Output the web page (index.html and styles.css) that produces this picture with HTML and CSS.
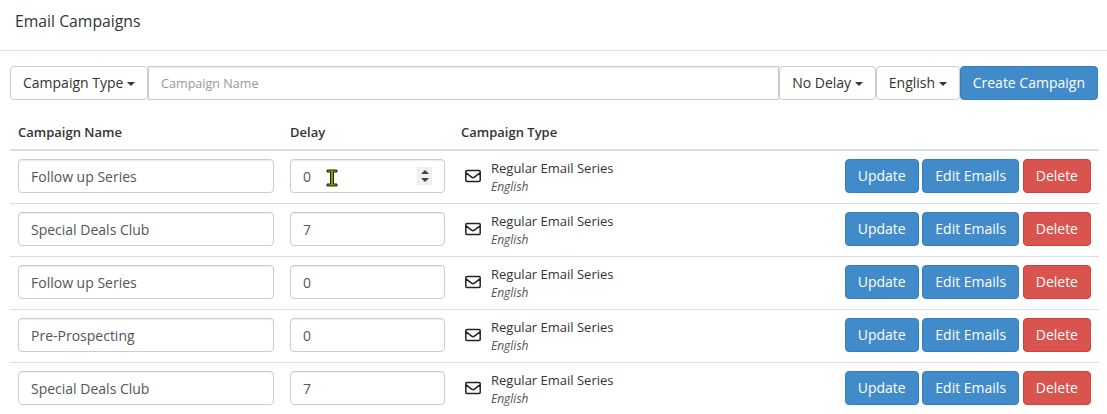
FILE: index.html
```html
<!DOCTYPE html>
<html>
    <head>
        <title>Email Campaigns</title>
        <link rel="stylesheet" href="styles.css">
    </head>
    <body>
        <div class="page-title">Email Campaigns</div>

        <div class="create-bar">
            <button class="btn">Campaign Type <span class="caret"></span></button>
            <input class="form-control name-input" type="text" placeholder="Campaign Name">
            <button class="btn">No Delay <span class="caret"></span></button>
            <button class="btn">English <span class="caret"></span></button>
            <button class="btn btn-primary">Create Campaign</button>
        </div>

        <table class="campaigns">
            <thead>
                <tr>
                    <th class="col-name">Campaign Name</th>
                    <th class="col-delay">Delay</th>
                    <th>Campaign Type</th>
                    <th></th>
                </tr>
            </thead>
            <tbody>
                <tr>
                    <td><input class="form-control" type="text" value="Follow up Series"></td>
                    <td class="delay-cell">
                        <input class="form-control" type="number" value="0">
                        <div class="spinner">
                            <span class="spin-up"></span>
                            <span class="spin-down"></span>
                        </div>
                        <svg class="text-cursor" width="12" height="18" viewBox="0 0 12 18">
                            <path d="M1 1h10v2H7.500v12H11v2H1v-2h3.500V3H1z" fill="#8a9a00" stroke="#1c2400" stroke-width="1"/>
                        </svg>
                    </td>
                    <td>
                        <div class="type-info">
                            <svg class="envelope" width="16" height="14" viewBox="0 0 16 14"><path d="M2 1.500h12a1.200 1.200 0 0 1 1.200 1.200v8.600a1.200 1.200 0 0 1-1.200 1.200H2a1.200 1.200 0 0 1-1.200-1.200V2.700A1.200 1.200 0 0 1 2 1.500zM1 3.800l5.600 4.400a2.200 2.200 0 0 0 2.800 0L15 3.800" fill="none" stroke="#222" stroke-width="1.500"/></svg>
                            <div>
                                <div class="type-name">Regular Email Series</div>
                                <div class="type-lang">English</div>
                            </div>
                        </div>
                    </td>
                    <td class="actions">
                        <button class="btn btn-primary">Update</button>
                        <button class="btn btn-primary">Edit Emails</button>
                        <button class="btn btn-danger">Delete</button>
                    </td>
                </tr>
                <tr>
                    <td><input class="form-control" type="text" value="Special Deals Club"></td>
                    <td><input class="form-control" type="number" value="7"></td>
                    <td>
                        <div class="type-info">
                            <svg class="envelope" width="16" height="14" viewBox="0 0 16 14"><path d="M2 1.500h12a1.200 1.200 0 0 1 1.200 1.200v8.600a1.200 1.200 0 0 1-1.200 1.200H2a1.200 1.200 0 0 1-1.200-1.200V2.700A1.200 1.200 0 0 1 2 1.500zM1 3.800l5.600 4.400a2.200 2.200 0 0 0 2.800 0L15 3.800" fill="none" stroke="#222" stroke-width="1.500"/></svg>
                            <div>
                                <div class="type-name">Regular Email Series</div>
                                <div class="type-lang">English</div>
                            </div>
                        </div>
                    </td>
                    <td class="actions">
                        <button class="btn btn-primary">Update</button>
                        <button class="btn btn-primary">Edit Emails</button>
                        <button class="btn btn-danger">Delete</button>
                    </td>
                </tr>
                <tr>
                    <td><input class="form-control" type="text" value="Follow up Series"></td>
                    <td><input class="form-control" type="number" value="0"></td>
                    <td>
                        <div class="type-info">
                            <svg class="envelope" width="16" height="14" viewBox="0 0 16 14"><path d="M2 1.500h12a1.200 1.200 0 0 1 1.200 1.200v8.600a1.200 1.200 0 0 1-1.200 1.200H2a1.200 1.200 0 0 1-1.200-1.200V2.700A1.200 1.200 0 0 1 2 1.500zM1 3.800l5.600 4.400a2.200 2.200 0 0 0 2.800 0L15 3.800" fill="none" stroke="#222" stroke-width="1.500"/></svg>
                            <div>
                                <div class="type-name">Regular Email Series</div>
                                <div class="type-lang">English</div>
                            </div>
                        </div>
                    </td>
                    <td class="actions">
                        <button class="btn btn-primary">Update</button>
                        <button class="btn btn-primary">Edit Emails</button>
                        <button class="btn btn-danger">Delete</button>
                    </td>
                </tr>
                <tr>
                    <td><input class="form-control" type="text" value="Pre-Prospecting"></td>
                    <td><input class="form-control" type="number" value="0"></td>
                    <td>
                        <div class="type-info">
                            <svg class="envelope" width="16" height="14" viewBox="0 0 16 14"><path d="M2 1.500h12a1.200 1.200 0 0 1 1.200 1.200v8.600a1.200 1.200 0 0 1-1.200 1.200H2a1.200 1.200 0 0 1-1.200-1.200V2.700A1.200 1.200 0 0 1 2 1.500zM1 3.800l5.600 4.400a2.200 2.200 0 0 0 2.800 0L15 3.800" fill="none" stroke="#222" stroke-width="1.500"/></svg>
                            <div>
                                <div class="type-name">Regular Email Series</div>
                                <div class="type-lang">English</div>
                            </div>
                        </div>
                    </td>
                    <td class="actions">
                        <button class="btn btn-primary">Update</button>
                        <button class="btn btn-primary">Edit Emails</button>
                        <button class="btn btn-danger">Delete</button>
                    </td>
                </tr>
                <tr>
                    <td><input class="form-control" type="text" value="Special Deals Club"></td>
                    <td><input class="form-control" type="number" value="7"></td>
                    <td>
                        <div class="type-info">
                            <svg class="envelope" width="16" height="14" viewBox="0 0 16 14"><path d="M2 1.500h12a1.200 1.200 0 0 1 1.200 1.200v8.600a1.200 1.200 0 0 1-1.200 1.200H2a1.200 1.200 0 0 1-1.200-1.200V2.700A1.200 1.200 0 0 1 2 1.500zM1 3.800l5.600 4.400a2.200 2.200 0 0 0 2.800 0L15 3.800" fill="none" stroke="#222" stroke-width="1.500"/></svg>
                            <div>
                                <div class="type-name">Regular Email Series</div>
                                <div class="type-lang">English</div>
                            </div>
                        </div>
                    </td>
                    <td class="actions">
                        <button class="btn btn-primary">Update</button>
                        <button class="btn btn-primary">Edit Emails</button>
                        <button class="btn btn-danger">Delete</button>
                    </td>
                </tr>
            </tbody>
        </table>
    </body>
</html>
```

FILE: styles.css
```css
body, html {
    margin: 0;
    padding: 0;
    height: 100%;
    background-color: white;
    color: #333;
    font-family: 'Open Sans', sans-serif;
    font-size: 14px;
    overflow: hidden;
}

.page-title {
    height: 51px;
    box-sizing: border-box;
    padding: 10px 15px 0;
    font-size: 15.75px;
    line-height: 22px;
    border-bottom: 1px solid #ddd;
    margin-bottom: 15px;
}

.create-bar {
    display: flex;
    margin: 0 9px 0 10px;
}

.btn {
    height: 34px;
    box-sizing: border-box;
    padding: 6px 12px;
    font-family: inherit;
    font-size: 14px;
    line-height: 20px;
    color: #333;
    background-color: white;
    border: 1px solid #ccc;
    border-radius: 4px;
    white-space: nowrap;
}

.btn-primary {
    color: white;
    background-color: #428bca;
    border-color: #357ebd;
}

.btn-danger {
    color: white;
    background-color: #d9534f;
    border-color: #d43f3a;
}

.caret {
    display: inline-block;
    width: 0;
    height: 0;
    vertical-align: middle;
    border-top: 4px solid;
    border-left: 4px solid transparent;
    border-right: 4px solid transparent;
}

.form-control {
    width: 100%;
    height: 34px;
    box-sizing: border-box;
    padding: 6px 12px;
    font-family: inherit;
    font-size: 14px;
    line-height: 20px;
    color: #555;
    background-color: white;
    border: 1px solid #ccc;
    border-radius: 4px;
    box-shadow: inset 0 1px 1px rgba(0,0,0,0.075);
}

.form-control::placeholder {
    color: #999;
}

.name-input {
    flex: 1;
    width: auto;
    min-width: 0;
    font-size: 12.6px;
    border-radius: 0;
}

.campaigns {
    width: 1089px;
    margin: 15px 0 0 10px;
    border-collapse: collapse;
    table-layout: fixed;
}

.campaigns th {
    height: 34px;
    box-sizing: border-box;
    padding: 8px;
    font-size: 13px;
    font-weight: 600;
    line-height: 18px;
    text-align: left;
    border-bottom: 2px solid #ddd;
}

.col-name {
    width: 272px;
}

.col-delay {
    width: 171px;
}

.campaigns td {
    height: 53px;
    box-sizing: border-box;
    padding: 8px 8px 10px;
    vertical-align: top;
    border-bottom: 1px solid #ddd;
}

.campaigns tr:last-child td {
    border-bottom: none;
}

.delay-cell {
    position: relative;
}

.spinner {
    position: absolute;
    left: 135px;
    top: 16px;
    width: 15px;
    height: 18px;
    display: flex;
    flex-direction: column;
    align-items: center;
    justify-content: center;
    gap: 4px;
    background-color: #f0f0f0;
}

.spin-up {
    border-bottom: 4px solid #444;
    border-left: 4px solid transparent;
    border-right: 4px solid transparent;
}

.spin-down {
    border-top: 4px solid #444;
    border-left: 4px solid transparent;
    border-right: 4px solid transparent;
}

.text-cursor {
    position: absolute;
    left: 44px;
    top: 18px;
}

.type-info {
    display: flex;
    align-items: center;
    height: 34px;
    padding-left: 4px;
}

.envelope {
    flex: none;
    margin-right: 10px;
}

.type-name {
    font-size: 13px;
    line-height: 18px;
    margin-top: 2px;
}

.type-lang {
    font-size: 12px;
    font-style: italic;
    line-height: 19px;
    color: #555;
}

.actions {
    text-align: right;
}
```
